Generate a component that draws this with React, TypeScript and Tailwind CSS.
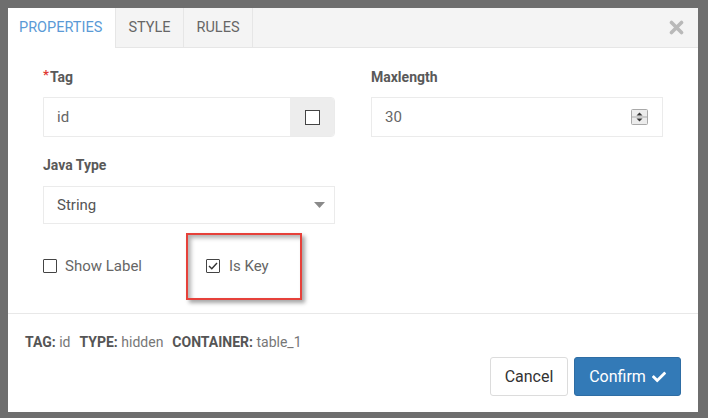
import React from 'react';
import { FaCheck } from 'react-icons/fa';

// ─── Small drawings ──────────────────────────────────────────────────────────

function CloseIcon() {
  return (
    <svg width="15" height="15" viewBox="0 0 15 15" aria-hidden="true">
      <path d="M2.5 2.5l10 10M12.5 2.5l-10 10" stroke="#b9b9b9" strokeWidth="3.6" strokeLinecap="round" />
    </svg>
  );
}

function Spinner() {
  return (
    <svg width="17" height="16" viewBox="0 0 17 16" aria-hidden="true">
      <rect x="0.5" y="0.5" width="16" height="15" rx="1" fill="#ececec" stroke="#a9a9a9" />
      <line x1="1" y1="8" x2="16" y2="8" stroke="#a9a9a9" />
      <path d="M5.5 6.5L8.5 3.5L11.5 6.5Z" fill="#333" />
      <path d="M5.5 9.5L8.5 12.5L11.5 9.5Z" fill="#333" />
    </svg>
  );
}

function Checkbox({ checked = false }: { checked?: boolean }) {
  return (
    <span className="flex-shrink-0 w-[14px] h-[14px] border-[1.5px] border-[#444] rounded-[1px] bg-white flex items-center justify-center">
      {checked && (
        <svg width="10" height="8" viewBox="0 0 10 8" aria-hidden="true">
          <path d="M1 4l2.8 2.8L9 1" stroke="#333" strokeWidth="1.4" fill="none" />
        </svg>
      )}
    </span>
  );
}

function Label({ children, required = false }: { children: React.ReactNode; required?: boolean }) {
  return (
    <div className="h-5 leading-5 text-[14px] font-bold text-[#595959] flex items-start">
      {required && <span className="text-[#e03b32] text-[13px] leading-4 mr-[1px]">*</span>}
      <span>{children}</span>
    </div>
  );
}

// ─── App ─────────────────────────────────────────────────────────────────────

export default function App() {
  return (
    <div
      className="w-[708px] h-[418px] bg-[#6e6e6e] pt-[8px] pl-[8px] overflow-hidden"
      style={{ fontFamily: 'Roboto, "Liberation Sans", sans-serif' }}
    >
      <div className="w-[690px] h-[404px] bg-white flex flex-col">
        {/* ── Tabs ─────────────────────────────────────────────── */}
        <div className="h-[40px] flex-shrink-0 bg-[#f4f4f4] border-b border-[#e6e6e6] flex items-stretch">
          <div className="w-[108px] -mb-px bg-white border-r border-[#e6e6e6] flex items-center pl-[11px] text-[14.5px] text-[#5a9ad6]">
            PROPERTIES
          </div>
          <div className="w-[68px] border-r border-[#e6e6e6] flex items-center justify-center text-[14.5px] text-[#666]">
            STYLE
          </div>
          <div className="w-[69px] border-r border-[#e6e6e6] flex items-center justify-center text-[14.5px] text-[#666]">
            RULES
          </div>
          <div className="flex-1 flex items-center justify-end pr-[14px]">
            <CloseIcon />
          </div>
        </div>

        {/* ── Body ─────────────────────────────────────────────── */}
        <div className="h-[266px] flex-shrink-0 border-b border-[#e8e8e8] px-[35px] pt-[19px]">
          <div className="grid grid-cols-2 gap-x-9">
            <div>
              <Label required>Tag</Label>
              <div className="mt-[10px] h-[40px] flex border border-[#ebebeb] rounded-r-[4px] overflow-hidden">
                <div className="flex-1 flex items-center pl-[13px] text-[15px] text-[#666]">id</div>
                <div className="w-[44px] bg-[#ededed] flex items-center justify-center">
                  <span className="w-[15px] h-[15px] border-[1.5px] border-[#444] bg-white" />
                </div>
              </div>
            </div>
            <div>
              <Label>Maxlength</Label>
              <div className="mt-[10px] h-[40px] flex items-center justify-between border border-[#ebebeb] pl-[13px] pr-[14px] text-[15px] text-[#666]">
                <span>30</span>
                <Spinner />
              </div>
            </div>

            <div className="mt-[18px]">
              <Label>Java Type</Label>
              <div className="mt-[11px] h-[38px] flex items-center justify-between border border-[#ebebeb] pl-[13px] pr-[9px] text-[15px] text-[#555]">
                <span>String</span>
                <svg width="11" height="6" viewBox="0 0 11 6" aria-hidden="true">
                  <path d="M0 0h11L5.5 6Z" fill="#8a8a8a" />
                </svg>
              </div>
            </div>
            <div />
          </div>

          <div className="mt-[32px] h-5 flex items-center text-[15px] text-[#666]">
            <div className="w-[163px] flex items-center gap-2">
              <Checkbox />
              <span>Show Label</span>
            </div>
            <div className="relative flex items-center gap-[9px]">
              <Checkbox checked />
              <span>Is Key</span>
              {/* annotation frame */}
              <div className="absolute -left-[20px] -top-[22px] w-[116px] h-[67px] border-2 border-[#e6413a] shadow-[3px_3px_4px_rgba(0,0,0,0.35),inset_3px_3px_4px_rgba(0,0,0,0.3)]" />
            </div>
          </div>
        </div>

        {/* ── Footer ───────────────────────────────────────────── */}
        <div className="flex-1 px-[17px] pt-[18px]">
          <div className="h-5 leading-5 text-[14px] flex gap-[9px]">
            <span>
              <b className="text-[#555]">TAG:</b> <span className="text-[#777]">id</span>
            </span>
            <span>
              <b className="text-[#555]">TYPE:</b> <span className="text-[#777]">hidden</span>
            </span>
            <span>
              <b className="text-[#555]">CONTAINER:</b> <span className="text-[#777]">table_1</span>
            </span>
          </div>
          <div className="mt-[5px] flex justify-end gap-[6px]">
            <button
              type="button"
              className="h-[39px] w-[78px] border border-[#dcdcdc] rounded-[3px] bg-white text-[16px] text-[#333]"
            >
              Cancel
            </button>
            <button
              type="button"
              className="h-[39px] w-[107px] justify-center rounded-[3px] bg-[#337ab7] border border-[#2e6da4] text-[16px] text-white flex items-center gap-[6px]"
            >
              Confirm
              <FaCheck size={14} />
            </button>
          </div>
        </div>
      </div>
    </div>
  );
}
